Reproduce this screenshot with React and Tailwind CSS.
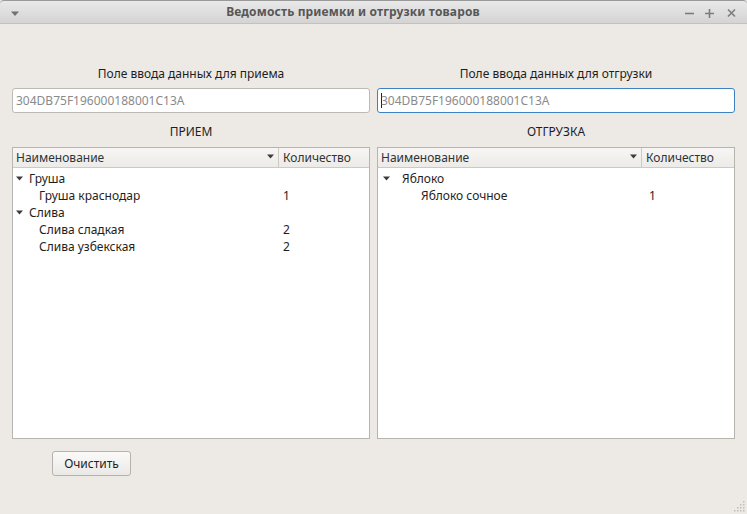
import React from "react";

const receive = [
  { name: "Груша", children: [{ name: "Груша краснодар", qty: 1 }] },
  {
    name: "Слива",
    children: [
      { name: "Слива сладкая", qty: 2 },
      { name: "Слива узбекская", qty: 2 },
    ],
  },
];

const shipment = [{ name: "Яблоко", children: [{ name: "Яблоко сочное", qty: 1 }] }];

function Arrow() {
  return (
    <svg width="7" height="5" viewBox="0 0 7 5">
      <path d="M0 0.5h7L3.5 4.5z" fill="#3c3c3c" />
    </svg>
  );
}

function Tree({ groups, nameCol, arrowPad, textPad, childPad, qtyPad, sortX }) {
  return (
    <div className="h-[292px] border border-[#b8b4ae] bg-white flex flex-col">
      <div className="h-[20px] flex bg-gradient-to-b from-[#f7f6f4] to-[#edebe8] border-b border-[#cdc9c3] text-[#2e3436]">
        <div
          className="relative flex items-center pl-[3px] border-r border-[#cdc9c3]"
          style={{ width: nameCol }}
        >
          Наименование
          <span className="absolute top-[6px]" style={{ left: sortX }}>
            <Arrow />
          </span>
        </div>
        <div className="flex items-center pl-[4px]">Количество</div>
      </div>
      <div className="pt-[2px]">
        {groups.map((g) => (
          <div key={g.name}>
            <div className="h-[17px] flex items-center" style={{ paddingLeft: arrowPad }}>
              <Arrow />
              <span style={{ marginLeft: textPad }}>{g.name}</span>
            </div>
            {g.children.map((c) => (
              <div key={c.name} className="h-[17px] flex items-center">
                <span style={{ paddingLeft: childPad, width: nameCol + qtyPad }}>{c.name}</span>
                <span>{c.qty}</span>
              </div>
            ))}
          </div>
        ))}
      </div>
    </div>
  );
}

export default function App() {
  return (
    <div
      className="w-[747px] h-[514px] bg-[#edeae6] flex flex-col text-[12px] text-[#1e1e1e] overflow-hidden relative"
      style={{ fontFamily: '"Noto Sans", "DejaVu Sans", sans-serif' }}
    >
      <div className="h-[24px] shrink-0 flex items-center relative rounded-t-[4px] bg-gradient-to-b from-[#e9e9e9] to-[#d4d4d4] border-t border-[#9a9a9a] border-b border-b-[#c2c2c2]">
        <svg width="10" height="6" viewBox="0 0 10 6" className="absolute left-[10px] top-[10px]">
          <path d="M1 0.5h8L5 5z" fill="#707070" />
        </svg>
        <div className="flex-1 text-center font-bold text-[12px] text-[#575757] pr-[41px] tracking-[0.15px]">
          Ведомость приемки и отгрузки товаров
        </div>
        <svg width="56" height="12" viewBox="0 0 56 12" className="absolute right-[8px] top-[6px]">
          <path d="M2 6.5h9" stroke="#7c7c7c" strokeWidth="1.6" />
          <path d="M22 6.5h9M26.5 2v9" stroke="#7c7c7c" strokeWidth="1.6" />
          <path d="M45 2.5l7 7M52 2.5l-7 7" stroke="#7c7c7c" strokeWidth="1.6" />
        </svg>
      </div>

      <div className="grid grid-cols-2 gap-[7px] px-[12px] pt-[41px]">
        <div className="flex flex-col">
          <div className="h-[17px] flex items-center justify-center">Поле ввода данных для приема</div>
          <div className="mt-[6px] h-[25px] rounded-[3px] border border-[#bdb9b3] bg-white flex items-center pl-[3px] text-[#8a8a8a]">
            304DB75F196000188001C13A
          </div>
          <div className="mt-[10px] h-[17px] flex items-center justify-center">ПРИЕМ</div>
          <div className="mt-[7px]">
            <Tree groups={receive} nameCol={266} arrowPad={3} textPad={6} childPad={26} qtyPad={4} sortX={254} />
          </div>
        </div>
        <div className="flex flex-col">
          <div className="h-[17px] flex items-center justify-center">Поле ввода данных для отгрузки</div>
          <div className="mt-[6px] h-[25px] rounded-[3px] border border-[#3d83c3] bg-white flex items-center pl-[3px] text-[#8a8a8a]">
            <span className="w-px h-[15px] bg-[#222] mr-[-1px]" />
            304DB75F196000188001C13A
          </div>
          <div className="mt-[10px] h-[17px] flex items-center justify-center">ОТГРУЗКА</div>
          <div className="mt-[7px]">
            <Tree groups={shipment} nameCol={264} arrowPad={5} textPad={12} childPad={43} qtyPad={7} sortX={252} />
          </div>
        </div>
      </div>

      <div className="pl-[52px] mt-[12px]">
        <button className="w-[79px] h-[25px] rounded-[3px] border border-[#b5b1ab] bg-gradient-to-b from-[#fbfaf9] to-[#ebe9e6] text-[#1e1e1e]">
          Очистить
        </button>
      </div>

      <svg width="12" height="12" viewBox="0 0 12 12" className="absolute right-[2px] bottom-[2px]">
        {[
          [10, 2], [7, 5], [10, 5], [4, 8], [7, 8], [10, 8], [1, 11], [4, 11], [7, 11], [10, 11],
        ].map(([x, y]) => (
          <rect key={x + "-" + y} x={x} y={y - 1} width="1.5" height="1.5" fill="#c2bdb6" />
        ))}
      </svg>
    </div>
  );
}
